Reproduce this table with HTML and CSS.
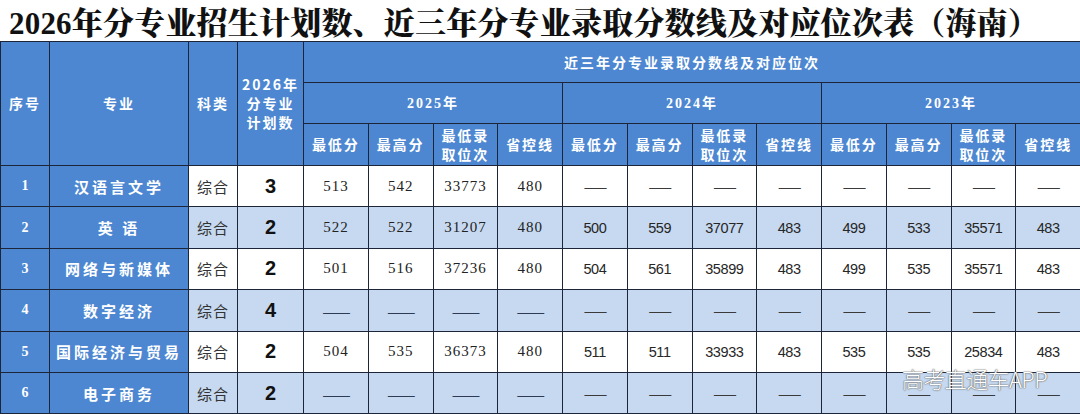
FILE: index.html
```html
<!DOCTYPE html>
<html lang="zh">
<head>
<meta charset="utf-8">
<link rel="stylesheet" href="styles.css">
</head>
<body>
<div class="page">
  <h1 class="title">2026年分专业招生计划数、近三年分专业录取分数线及对应位次表（海南）</h1>
  <table class="grid">
    <colgroup>
      <col class="c-no"><col class="c-major"><col class="c-type"><col class="c-plan">
      <col class="c-s"><col class="c-s"><col class="c-s"><col class="c-s">
      <col class="c-s"><col class="c-s"><col class="c-s"><col class="c-s">
      <col class="c-s"><col class="c-s"><col class="c-s"><col class="c-s">
    </colgroup>
    <thead>
      <tr class="h1">
        <th rowspan="3">序号</th>
        <th rowspan="3">专业</th>
        <th rowspan="3">科类</th>
        <th rowspan="3" class="plan-h">2026年<br>分专业<br>计划数</th>
        <th colspan="12" class="wide">近三年分专业录取分数线及对应位次</th>
      </tr>
      <tr class="h2">
        <th colspan="4" class="year">2025年</th>
        <th colspan="4" class="year">2024年</th>
        <th colspan="4" class="year">2023年</th>
      </tr>
      <tr class="h3">
        <th>最低分</th><th>最高分</th><th class="two">最低录<br>取位次</th><th>省控线</th>
        <th>最低分</th><th>最高分</th><th class="two">最低录<br>取位次</th><th>省控线</th>
        <th>最低分</th><th>最高分</th><th class="two">最低录<br>取位次</th><th>省控线</th>
      </tr>
    </thead>
    <tbody>
      <tr class="r-white">
        <td class="no">1</td><td class="major">汉语言文学</td><td class="type">综合</td><td class="plan">3</td>
        <td class="n25">513</td><td class="n25">542</td><td class="n25">33773</td><td class="n25">480</td>
        <td class="dash">——</td><td class="dash">——</td><td class="dash">——</td><td class="dash">——</td>
        <td class="dash">——</td><td class="dash">——</td><td class="dash">——</td><td class="dash">——</td>
      </tr>
      <tr class="r-blue">
        <td class="no">2</td><td class="major">英 语</td><td class="type">综合</td><td class="plan">2</td>
        <td class="n25">522</td><td class="n25">522</td><td class="n25">31207</td><td class="n25">480</td>
        <td class="num">500</td><td class="num">559</td><td class="num">37077</td><td class="num">483</td>
        <td class="num">499</td><td class="num">533</td><td class="num">35571</td><td class="num">483</td>
      </tr>
      <tr class="r-white">
        <td class="no">3</td><td class="major">网络与新媒体</td><td class="type">综合</td><td class="plan">2</td>
        <td class="n25">501</td><td class="n25">516</td><td class="n25">37236</td><td class="n25">480</td>
        <td class="num">504</td><td class="num">561</td><td class="num">35899</td><td class="num">483</td>
        <td class="num">499</td><td class="num">535</td><td class="num">35571</td><td class="num">483</td>
      </tr>
      <tr class="r-blue">
        <td class="no">4</td><td class="major">数字经济</td><td class="type">综合</td><td class="plan">4</td>
        <td class="dash long">——</td><td class="dash long">——</td><td class="dash long">——</td><td class="dash long">——</td>
        <td class="dash">——</td><td class="dash">——</td><td class="dash">——</td><td class="dash">——</td>
        <td class="dash">——</td><td class="dash">——</td><td class="dash">——</td><td class="dash">——</td>
      </tr>
      <tr class="r-white">
        <td class="no">5</td><td class="major">国际经济与贸易</td><td class="type">综合</td><td class="plan">2</td>
        <td class="n25">504</td><td class="n25">535</td><td class="n25">36373</td><td class="n25">480</td>
        <td class="num">511</td><td class="num">511</td><td class="num">33933</td><td class="num">483</td>
        <td class="num">535</td><td class="num">535</td><td class="num">25834</td><td class="num">483</td>
      </tr>
      <tr class="r-blue">
        <td class="no">6</td><td class="major">电子商务</td><td class="type">综合</td><td class="plan">2</td>
        <td class="dash long">——</td><td class="dash long">——</td><td class="dash long">——</td><td class="dash long">——</td>
        <td class="dash">——</td><td class="dash">——</td><td class="dash">——</td><td class="dash">——</td>
        <td class="dash">——</td><td class="dash">——</td><td class="dash">——</td><td class="dash">——</td>
      </tr>
    </tbody>
  </table>
  <div class="watermark">高考直通车APP</div>
</div>
</body>
</html>
```

FILE: styles.css
```css
html, body {
  margin: 0;
  padding: 0;
  background: #ffffff;
}

.page {
  position: relative;
  width: 1080px;
  height: 414px;
  overflow: hidden;
}

.title {
  margin: 0;
  height: 41px;
  display: flex;
  align-items: center;
  justify-content: flex-start;
  padding-left: 9px;
  font-family: "Liberation Serif", "Noto Serif CJK SC", "Noto Sans CJK SC", serif;
  font-size: 31px;
  font-weight: 900;
  color: #111111;
  letter-spacing: 0.2px;
  white-space: nowrap;
}

.grid {
  border-collapse: collapse;
  table-layout: fixed;
  width: 1080px;
  font-family: "Noto Sans CJK SC", sans-serif;
}

.c-no { width: 49px; }
.c-major { width: 139px; }
.c-type { width: 49px; }
.c-plan { width: 66px; }
.c-s { width: 64.75px; }

.grid th,
.grid td {
  border: 1px solid #1d2638;
  padding: 0;
  text-align: center;
  vertical-align: middle;
}

.grid th {
  background: #4d87d1;
  color: #ffffff;
  font-size: 14px;
  font-weight: 700;
  letter-spacing: 2px;
  line-height: 19px;
}

.h1 { height: 41px; }
.h2 { height: 41px; }
.h3 { height: 42px; }

.wide {
  letter-spacing: 3.5px;
}

.year {
  font-family: "Liberation Serif", "Noto Sans CJK SC", serif;
  font-size: 15px;
  letter-spacing: 2px;
}

.plan-h {
  font-size: 14px;
  line-height: 20px;
}

.two {
  line-height: 18px;
}

.grid tbody tr { height: 41.4px; }

.r-white td { background: #ffffff; }
.r-blue td { background: #c6d9f0; }

.grid td.no,
.grid td.major {
  background: #4d87d1;
  color: #ffffff;
  font-weight: 700;
}

.no {
  font-family: "Liberation Serif", serif;
  font-size: 14px;
}

.major {
  font-size: 15px;
  letter-spacing: 3px;
  white-space: pre;
}

.type {
  color: #333333;
  font-size: 15px;
  letter-spacing: 1px;
}

.plan {
  font-family: "Liberation Sans", Arial, sans-serif;
  font-size: 20px;
  font-weight: 700;
  color: #111111;
}

.n25 {
  font-family: "Liberation Serif", serif;
  font-size: 15px;
  letter-spacing: 1px;
  color: #222222;
}

.num {
  font-family: "Liberation Sans", Arial, sans-serif;
  font-size: 14.5px;
  letter-spacing: -0.4px;
  color: #262626;
}

.dash {
  font-family: "Noto Sans CJK SC", sans-serif;
  font-size: 14px;
  color: #3a3a3a;
  letter-spacing: -1px;
}

.dash.long {
  font-size: 17px;
  color: #2f3b55;
}

.watermark {
  position: absolute;
  left: 902px;
  top: 362px;
  font-family: "Noto Sans CJK SC", sans-serif;
  font-weight: 300;
  font-size: 22px;
  color: #ffffff;
  letter-spacing: -0.6px;
  text-shadow: 0 0 1px #666666, 0 0 1px #666666, 0 0 2px #888888;
}
```
